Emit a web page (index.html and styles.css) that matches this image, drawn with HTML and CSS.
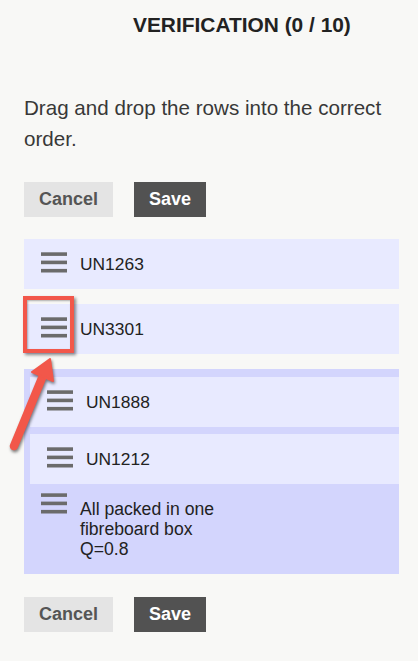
FILE: index.html
```html
<!DOCTYPE html>
<html lang="en">
<head>
    <meta charset="UTF-8">
    <meta name="viewport" content="width=device-width, initial-scale=1.0">
    <title>Verification</title>
    <link rel="stylesheet" href="styles.css">
</head>
<body>

    <div class="page">
        <h1 class="title">VERIFICATION (0 / 10)</h1>
        <p class="hint">Drag and drop the rows into the correct order.</p>

        <div class="actions">
            <button type="button" class="btn btn-cancel">Cancel</button>
            <button type="button" class="btn btn-save">Save</button>
        </div>

        <div class="rows">
            <div class="row">
                <svg class="handle" width="26" height="21" viewBox="0 0 26 21"><rect y="0.3" width="26" height="3.6"/><rect y="8.6" width="26" height="3.6"/><rect y="16.9" width="26" height="3.6"/></svg>
                <span>UN1263</span>
            </div>
            <div class="row">
                <svg class="handle" width="26" height="21" viewBox="0 0 26 21"><rect y="0.3" width="26" height="3.6"/><rect y="8.6" width="26" height="3.6"/><rect y="16.9" width="26" height="3.6"/></svg>
                <span>UN3301</span>
            </div>
            <div class="group">
                <div class="group-children">
                    <div class="row">
                        <svg class="handle" width="26" height="21" viewBox="0 0 26 21"><rect y="0.3" width="26" height="3.6"/><rect y="8.6" width="26" height="3.6"/><rect y="16.9" width="26" height="3.6"/></svg>
                        <span>UN1888</span>
                    </div>
                    <div class="row">
                        <svg class="handle" width="26" height="21" viewBox="0 0 26 21"><rect y="0.3" width="26" height="3.6"/><rect y="8.6" width="26" height="3.6"/><rect y="16.9" width="26" height="3.6"/></svg>
                        <span>UN1212</span>
                    </div>
                </div>
                <div class="group-head">
                    <svg class="handle" width="26" height="21" viewBox="0 0 26 21"><rect y="0.3" width="26" height="3.6"/><rect y="8.6" width="26" height="3.6"/><rect y="16.9" width="26" height="3.6"/></svg>
                    <span class="group-label">All packed in one fibreboard box Q=0.8</span>
                </div>
            </div>
        </div>

        <div class="actions actions-bottom">
            <button type="button" class="btn btn-cancel">Cancel</button>
            <button type="button" class="btn btn-save">Save</button>
        </div>

        <!-- annotation over the second row's handle -->
        <div class="mark-box"></div>
        <svg class="mark-arrow" width="70" height="110" viewBox="0 350 70 110">
            <line x1="14" y1="446" x2="42" y2="378" />
            <polygon points="50,359 53,381 32,372" />
        </svg>
    </div>

</body>
</html>
```

FILE: styles.css
```css
:root {
    --bg: #f8f8f6;
    --row-bg: #e8eaff;
    --group-bg: #d3d5fd;
    --handle: #6b6b6b;
    --text: #222;
    --mark: #f2574a;
}
* { margin: 0; padding: 0; box-sizing: border-box; }
body {
    font-family: "Liberation Sans", Arial, sans-serif;
    background: var(--bg);
    color: var(--text);
}
.page {
    position: relative;
    padding: 13px 19px 0 24px;
}
.title {
    font-size: 20.9px;
    line-height: 24px;
    font-weight: bold;
    padding-left: 109px;
    color: #222;
}
.hint {
    margin-top: 55px;
    font-size: 20.6px;
    line-height: 31px;
    color: #383838;
    padding-right: 4px;
}
.actions {
    display: flex;
    gap: 21px;
    margin-top: 28px;
}
.actions-bottom { margin-top: 23px; }
.btn {
    height: 35px;
    padding: 0 15px;
    border: none;
    font-family: inherit;
    font-size: 18px;
    font-weight: bold;
    cursor: pointer;
}
.btn-cancel { background: #e4e4e4; color: #555; }
.btn-save { background: #525252; color: #fff; }

.rows {
    display: flex;
    flex-direction: column;
    gap: 15px;
    margin-top: 22px;
}
.row {
    display: flex;
    align-items: center;
    gap: 13px;
    height: 50px;
    padding-left: 17px;
    background: var(--row-bg);
    font-size: 17.4px;
}
.handle { fill: var(--handle); flex-shrink: 0; margin-top: -3px; }
.group { background: var(--group-bg); }
.group-children {
    display: flex;
    flex-direction: column;
    gap: 7px;
    padding: 8px 0 0 6px;
}
.group-head {
    display: flex;
    align-items: flex-start;
    gap: 13px;
    padding: 12px 0 15px 17px;
    font-size: 17.6px;
    line-height: 20px;
}
.group-label { max-width: 145px; margin-top: 3px; }

.mark-box {
    position: absolute;
    left: 23px;
    top: 296px;
    width: 51px;
    height: 57px;
    border: 4px solid var(--mark);
    box-shadow: 2px 2px 3px rgba(0, 0, 0, 0.45), inset 1px 1px 2px rgba(0, 0, 0, 0.3);
}
.mark-arrow {
    position: absolute;
    left: 0;
    top: 350px;
    filter: drop-shadow(1px 2px 1.5px rgba(0, 0, 0, 0.5));
}
.mark-arrow line { stroke: var(--mark); stroke-width: 8.5; stroke-linecap: round; }
.mark-arrow polygon { fill: var(--mark); stroke: var(--mark); stroke-width: 2; stroke-linejoin: round; }
```
